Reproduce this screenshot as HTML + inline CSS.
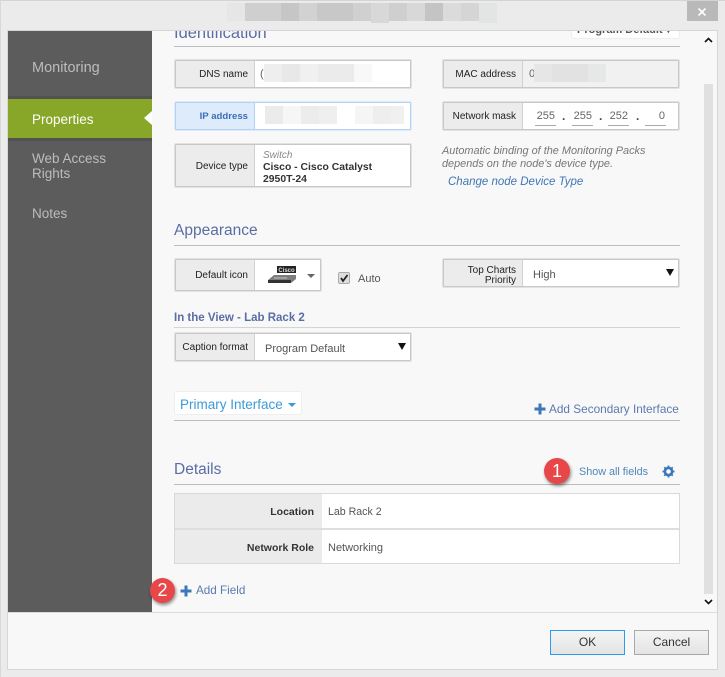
<!DOCTYPE html>
<html><head><meta charset="utf-8">
<style>
html,body{margin:0;padding:0}
body{width:725px;height:677px;overflow:hidden;position:relative;background:#ebebeb;font-family:"Liberation Sans",sans-serif;color:#333}
div,span.a{position:absolute;box-sizing:border-box}
.t{white-space:nowrap;line-height:14px}
.line{left:174px;width:506px;height:1px;background:#bdbdbd}
.grp{border:1px solid #e2e2e2;box-shadow:inset 0 0 0 1px #c8c8c8;border-radius:2px;background:#fff;box-sizing:border-box}
.lab{background:#ececec;border-right:1px solid #d2d2d2;left:1px;top:1px;bottom:1px;width:79px;font-size:10px;color:#222;text-align:right;padding-right:6px;padding-top:2px}
.h{font-size:15.5px;color:#5a6ea5;white-space:nowrap;line-height:18px}
.nav{left:32px;font-size:13.5px;color:#bcbcbc;white-space:nowrap;line-height:15px}
.v{font-size:11px;color:#555;white-space:nowrap;line-height:14px}
.oct{font-size:11px;color:#666;border-bottom:1px solid #aaa;width:21px;height:17px;line-height:15px;text-align:right;top:109px;padding-right:1px}
.dot{font-size:12px;font-weight:bold;color:#444;top:109px;line-height:14px}
.tri{width:0;height:0;border-left:4px solid transparent;border-right:4px solid transparent;border-top:7px solid #111}
.badge{border-radius:50%;background:#e8474a;color:#fff;text-align:center;font-size:18px;box-shadow:1px 2px 3px rgba(0,0,0,.45)}
.btn{border:1px solid #a9a9a9;background:linear-gradient(#f4f4f4,#e4e4e4);font-size:12px;color:#333;text-align:center;line-height:23px}
</style></head>
<body>
<!-- window top border -->
<div style="left:0;top:0;width:725px;height:1px;background:#d4d4d4"></div>
<div style="left:0;top:0;width:1px;height:677px;background:#d8d8d8"></div>
<!-- title mosaic -->
<div style="left:227px;top:3px;width:18px;height:18px;background:#e6e6e6"></div>
<div style="left:245px;top:3px;width:36px;height:18px;background:#cfcfcf"></div>
<div style="left:281px;top:3px;width:18px;height:18px;background:#c6c6c6"></div>
<div style="left:299px;top:3px;width:18px;height:18px;background:#d2d2d2"></div>
<div style="left:317px;top:3px;width:36px;height:18px;background:#c8c8c8"></div>
<div style="left:353px;top:3px;width:18px;height:18px;background:#d0d0d0"></div>
<div style="left:371px;top:3px;width:18px;height:20px;background:#d8d8d8"></div>
<div style="left:389px;top:3px;width:18px;height:18px;background:#cfcfcf"></div>
<div style="left:407px;top:3px;width:18px;height:18px;background:#d8d8d8"></div>
<div style="left:425px;top:3px;width:18px;height:18px;background:#c4c4c4"></div>
<div style="left:443px;top:3px;width:18px;height:18px;background:#dbdbdb"></div>
<div style="left:461px;top:3px;width:18px;height:18px;background:#d5d5d5"></div>
<div style="left:479px;top:3px;width:18px;height:20px;background:#e3e5e4"></div>
<!-- close -->
<div style="left:687px;top:1px;width:31px;height:20px;background:#b9b9b9"></div>
<svg style="position:absolute;left:696px;top:6px" width="12" height="12"><path d="M2.500 2.500L9.500 9.500M9.500 2.500L2.500 9.500" stroke="#fff" stroke-width="1.600"/></svg>
<!-- frame -->
<div style="left:7px;top:30px;width:711px;height:640px;background:#f8f8f8;border:1px solid #d6d6d6"></div>
<!-- sidebar -->
<div style="left:8px;top:31px;width:144px;height:581px;background:#5c5c5c"></div>
<div style="left:8px;top:99px;width:144px;height:39px;background:#88a627"></div>
<div style="left:8px;top:138px;width:144px;height:3px;background:#525252"></div>
<div style="left:8px;top:96px;width:144px;height:3px;background:#525252"></div>
<div style="left:144px;top:111px;width:0;height:0;border-top:7px solid transparent;border-bottom:7px solid transparent;border-right:8px solid #fff"></div>
<div class="nav" style="top:61px;font-size:14.500px">Monitoring</div>
<div class="nav" style="top:112px;color:#fff">Properties</div>
<div class="nav" style="top:151px;line-height:15px">Web Access<br>Rights</div>
<div class="nav" style="top:206px">Notes</div>
<!-- footer -->
<div style="left:8px;top:612px;width:709px;height:1px;background:#dcdcdc"></div>
<div class="btn" style="left:550px;top:630px;width:75px;height:25px;border-color:#2b9bf0">OK</div>
<div class="btn" style="left:634px;top:630px;width:75px;height:25px">Cancel</div>
<!-- scrollbar -->
<div style="left:704px;top:84px;width:9px;height:510px;background:#e0e0e0"></div>
<svg style="position:absolute;left:703px;top:36px" width="11" height="8"><path d="M2 6L5.500 2.500L9 6" fill="none" stroke="#111" stroke-width="1.600"/></svg>
<svg style="position:absolute;left:703px;top:598px" width="11" height="8"><path d="M2 2L5.500 5.500L9 2" fill="none" stroke="#111" stroke-width="1.600"/></svg>
<!-- Identification, clipped -->
<div style="left:152px;top:31px;width:552px;height:15px;overflow:hidden">
  <div class="h" style="left:22px;top:-7px;font-size:16.500px">Identification</div>
  <div style="left:419px;top:-10px;width:109px;height:18px;background:#fff;border:1px solid #eee;border-radius:3px;font-size:11px;font-weight:bold;color:#555;line-height:17px;padding-left:5px;white-space:nowrap">Program Default ▾</div>
</div>
<div class="line" style="top:46px"></div>

<!-- DNS -->
<div class="grp" style="left:174px;top:59px;width:238px;height:30px"><div class="lab" style="line-height:24px">DNS name</div></div>
<div class="v" style="left:260px;top:67px;color:#666">(</div>
<div style="left:264px;top:64px;width:18px;height:18px;background:#eee"></div>
<div style="left:282px;top:64px;width:18px;height:18px;background:#e8e8e8"></div>
<div style="left:300px;top:64px;width:18px;height:18px;background:#f0f0f0"></div>
<div style="left:318px;top:64px;width:36px;height:18px;background:#ebebeb"></div>
<div style="left:354px;top:64px;width:18px;height:18px;background:#f8f8f8"></div>
<!-- IP -->
<div class="grp" style="left:174px;top:101px;width:238px;height:30px;border-color:#dfeafa;box-shadow:inset 0 0 0 1px #b3d0f5"><div class="lab" style="line-height:24px;background:#deebfb;border-right-color:#b3d0f5;color:#3a6fb5;font-weight:bold;font-size:9.600px">IP address</div></div>
<div style="left:265px;top:106px;width:18px;height:18px;background:#ebebeb"></div>
<div style="left:283px;top:106px;width:18px;height:18px;background:#f6f6f6"></div>
<div style="left:301px;top:106px;width:18px;height:18px;background:#ececec"></div>
<div style="left:319px;top:106px;width:18px;height:18px;background:#efefef"></div>
<div style="left:355px;top:106px;width:18px;height:18px;background:#f5f5f5"></div>
<div style="left:373px;top:106px;width:18px;height:18px;background:#eeeeee"></div>
<div style="left:391px;top:106px;width:13px;height:18px;background:#f0f0f0"></div>
<!-- Device type -->
<div class="grp" style="left:174px;top:143px;width:238px;height:45px"><div class="lab" style="line-height:39px">Device type</div></div>
<div class="v" style="left:263px;top:149px;font-style:italic;font-size:10px;color:#888">Switch</div>
<div class="v" style="left:263px;top:162px;font-weight:bold;font-size:10.400px;color:#333;line-height:11.500px">Cisco - Cisco Catalyst<br>2950T-24</div>
<!-- MAC -->
<div class="grp" style="left:442px;top:59px;width:238px;height:30px;background:#f1f1f1"><div class="lab" style="line-height:24px">MAC address</div></div>
<div class="v" style="left:529px;top:67px;color:#666">0</div>
<div style="left:534px;top:64px;width:18px;height:18px;background:#e6e6e6"></div>
<div style="left:552px;top:64px;width:36px;height:18px;background:#e2e2e2"></div>
<div style="left:588px;top:64px;width:18px;height:18px;background:#e6e8e8"></div>
<!-- Netmask -->
<div class="grp" style="left:442px;top:101px;width:238px;height:30px"><div class="lab" style="line-height:24px">Network mask</div></div>
<div class="oct" style="left:535px">255</div><div class="dot" style="left:562px">.</div>
<div class="oct" style="left:572px">255</div><div class="dot" style="left:599px">.</div>
<div class="oct" style="left:608px">252</div><div class="dot" style="left:636px">.</div>
<div class="oct" style="left:645px">0</div>
<div class="t" style="left:442px;top:145px;font-size:10.900px;font-style:italic;color:#777;line-height:13px">Automatic binding of the Monitoring Packs<br>depends on the node's device type.</div>
<div class="t" style="left:448px;top:175px;font-size:11.500px;font-style:italic;color:#3f76b5">Change node Device Type</div>

<!-- Appearance -->
<div class="h" style="left:174px;top:222px">Appearance</div>
<div class="line" style="top:245px"></div>
<div class="grp" style="left:174px;top:258px;width:148px;height:34px"><div class="lab" style="line-height:28px">Default icon</div></div>
<svg style="position:absolute;left:267px;top:265px" width="30" height="20">
 <rect x="10" y="1" width="19" height="7" fill="#222"/>
 <text x="19.500" y="7" font-size="6" font-weight="bold" fill="#ddd" text-anchor="middle" font-family="Liberation Sans">Cisco</text>
 <path d="M1 15L7 10H29V14L24 18H1Z" fill="#7d7d7d"/>
 <path d="M1 15H24V18H1Z" fill="#333"/>
 <path d="M7 13H20" stroke="#c4c4c4" stroke-width="1"/>
</svg>
<div style="left:307px;top:274px;width:0;height:0;border-left:4px solid transparent;border-right:4px solid transparent;border-top:4px solid #666"></div>
<div style="left:338px;top:272px;width:12px;height:12px;background:#dedede;border:1px solid #aaa;border-radius:2px"></div>
<svg style="position:absolute;left:338px;top:272px" width="12" height="12"><path d="M3 6L5 9L9.500 3" fill="none" stroke="#222" stroke-width="1.800"/></svg>
<div class="v" style="left:358px;top:272px">Auto</div>

<div class="grp" style="left:442px;top:258px;width:238px;height:30px"><div class="lab" style="line-height:10px;padding-top:6px">Top Charts<br>Priority</div></div>
<div class="v" style="left:533px;top:268px">High</div>
<div class="tri" style="left:666px;top:269px"></div>

<div class="t" style="left:174px;top:311px;font-size:11.500px;font-weight:bold;color:#5a6ea5">In the View - Lab Rack 2</div>
<div class="line" style="top:327px;background:#d4d4d4"></div>
<div class="grp" style="left:174px;top:332px;width:238px;height:30px"><div class="lab" style="line-height:24px">Caption format</div></div>
<div class="v" style="left:265px;top:342px">Program Default</div>
<div class="tri" style="left:398px;top:343px"></div>

<div style="left:174px;top:391px;width:128px;height:24px;background:#fff;border:1px solid #eee;border-radius:3px"></div>
<div class="t" style="left:180px;top:398px;font-size:13.500px;color:#3b9ad9">Primary Interface</div>
<div style="left:288px;top:403px;width:0;height:0;border-left:4px solid transparent;border-right:4px solid transparent;border-top:4px solid #3b9ad9"></div>
<div class="line" style="top:420px"></div>
<svg style="position:absolute;left:534px;top:403px" width="12" height="12"><path d="M6 .500V11.500M.500 6H11.500" stroke="#3a78b8" stroke-width="3"/></svg>
<div class="t" style="left:549px;top:402px;font-size:11.800px;color:#5a7ab0">Add Secondary Interface</div>

<!-- Details -->
<div class="h" style="left:174px;top:461px">Details</div>
<div class="line" style="top:484px"></div>
<div class="badge" style="left:544px;top:458px;width:26px;height:26px;line-height:26px">1</div>
<div class="t" style="left:579px;top:465px;font-size:10.800px;color:#4f86bd">Show all fields</div>
<svg style="position:absolute;left:662px;top:465px" width="13" height="13" viewBox="0 0 13 13"><circle cx="6.500" cy="6.500" r="3.600" fill="none" stroke="#3a78b8" stroke-width="2.600"/><path d="M6.500 0.500V2.500M6.500 10.500V12.500M0.500 6.500H2.500M10.500 6.500H12.500M2.300 2.300L3.700 3.700M9.300 9.300L10.700 10.700M2.300 10.700L3.700 9.300M9.300 3.700L10.700 2.300" stroke="#3a78b8" stroke-width="1.800"/></svg>

<div style="left:174px;top:493px;width:506px;height:71px;background:#fff;border:1px solid #d9d9d9"></div>
<div style="left:175px;top:494px;width:147px;height:69px;background:#ebebeb"></div>
<div style="left:175px;top:528px;width:504px;height:2px;background:#dedede"></div>
<div class="t" style="left:175px;width:139px;text-align:right;top:505px;font-size:10.500px;font-weight:bold;color:#333">Location</div>
<div class="t" style="left:175px;width:139px;text-align:right;top:541px;font-size:10.500px;font-weight:bold;color:#333">Network Role</div>
<div class="v" style="left:328px;top:505px;font-size:10.600px">Lab Rack 2</div>
<div class="v" style="left:328px;top:541px">Networking</div>

<div class="badge" style="left:150px;top:578px;width:25px;height:25px;line-height:25px">2</div>
<svg style="position:absolute;left:180px;top:585px" width="12" height="12"><path d="M6 .500V11.500M.500 6H11.500" stroke="#3a78b8" stroke-width="3"/></svg>
<div class="t" style="left:196px;top:584px;font-size:11.700px;color:#5a7ab0">Add Field</div>
</body></html>
